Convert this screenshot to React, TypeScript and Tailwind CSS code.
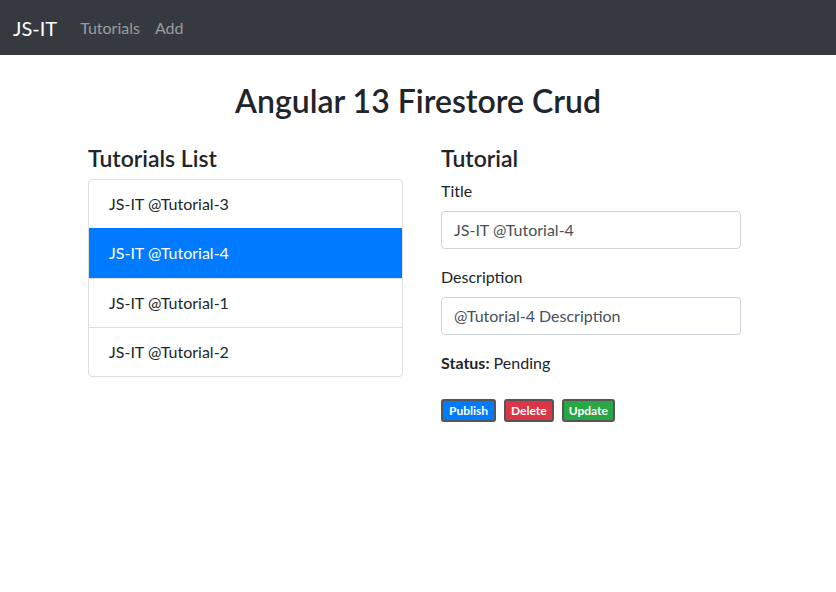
const items = ['JS-IT @Tutorial-3', 'JS-IT @Tutorial-4', 'JS-IT @Tutorial-1', 'JS-IT @Tutorial-2'];

export default function App() {
    return (
        <div className="min-h-[592px] bg-white text-[#212529] font-['Lato','Open_Sans',sans-serif]">
            {/* Navbar */}
            <nav className="h-[55px] bg-[#343a40] flex items-center px-[13px]">
                <span className="text-white text-[20px] mr-[23px]">JS-IT</span>
                <a className="text-white/50 text-[16px] mr-[15px]">Tutorials</a>
                <a className="text-white/50 text-[16px]">Add</a>
            </nav>

            <h1 className="text-center text-[32px] font-semibold mt-[23px] leading-[46px]">Angular 13 Firestore Crud</h1>

            <div className="flex pl-[88px] mt-[20px] gap-[38px]">
                {/* Tutorials list */}
                <div className="w-[315px]">
                    <h4 className="text-[23px] font-semibold leading-[28px] mb-[7px]">Tutorials List</h4>
                    <ul className="border border-[#dfdfdf] rounded-[4px] overflow-hidden">
                        {items.map((t, i) => (
                            <li
                                key={t}
                                className={
                                    i === 1
                                        ? 'h-[50px] flex items-center px-[20px] text-[16px] bg-[#007bff] text-white'
                                        : 'h-[49px] flex items-center px-[20px] text-[16px] border-t border-[#dfdfdf] first:border-t-0 first:h-[48px]'
                                }
                            >
                                {t}
                            </li>
                        ))}
                    </ul>
                </div>

                {/* Edit form */}
                <div className="w-[300px]">
                    <h4 className="text-[23px] font-semibold leading-[28px] mb-[7px]">Tutorial</h4>
                    <label className="block text-[16px] leading-[24px] mb-[8px]">Title</label>
                    <div className="h-[38px] border border-[#ced4da] rounded-[4px] flex items-center px-[12px] text-[16px] text-[#495057]">
                        JS-IT @Tutorial-4
                    </div>
                    <label className="block text-[16px] leading-[24px] mt-[16px] mb-[8px]">Description</label>
                    <div className="h-[38px] border border-[#ced4da] rounded-[4px] flex items-center px-[12px] text-[16px] text-[#495057]">
                        @Tutorial-4 Description
                    </div>
                    <div className="text-[16px] leading-[24px] mt-[16px]">
                        <strong className="font-bold">Status:</strong> Pending
                    </div>
                    <div className="flex gap-[8px] mt-[24px]">
                        <button className="h-[23px] px-[6px] border-2 border-[#555] rounded-[3px] bg-[#007bff] text-white text-[12px] font-bold leading-none">Publish</button>
                        <button className="h-[23px] px-[5px] border-2 border-[#555] rounded-[3px] bg-[#dc3545] text-white text-[12px] font-bold leading-none">Delete</button>
                        <button className="h-[23px] px-[5px] border-2 border-[#555] rounded-[3px] bg-[#28a745] text-white text-[12px] font-bold leading-none">Update</button>
                    </div>
                </div>
            </div>
        </div>
    );
}
